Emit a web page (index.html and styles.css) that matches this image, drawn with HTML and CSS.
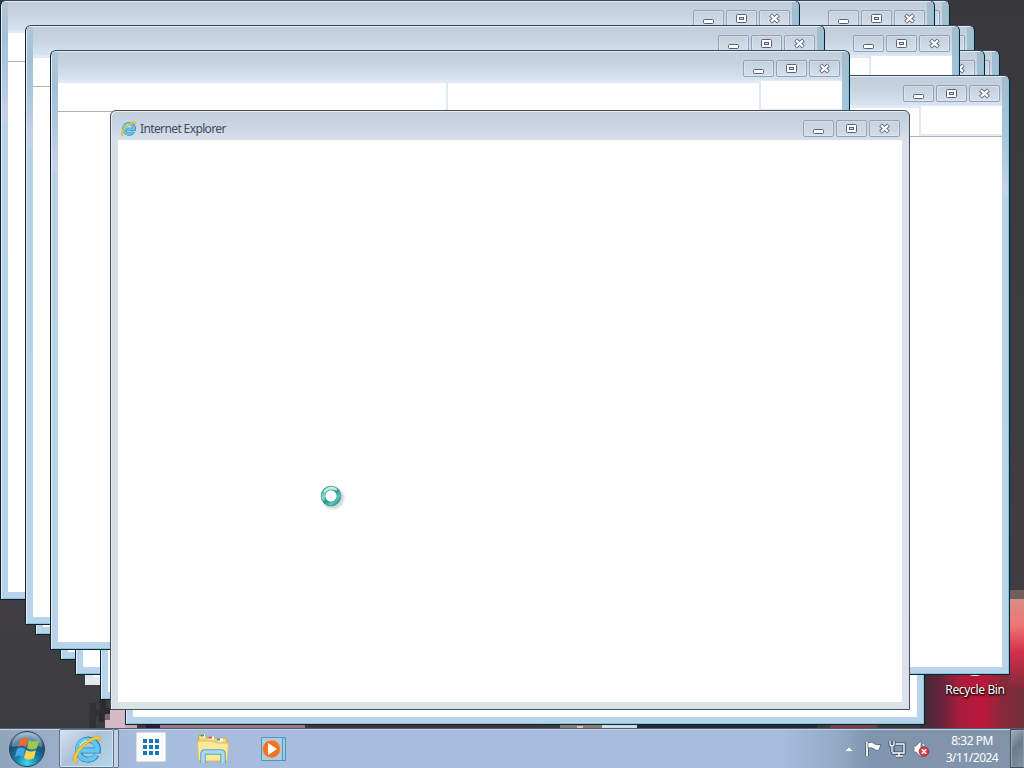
FILE: index.html
```
<!DOCTYPE html>
<html lang="en">

<head>
  <meta charset="UTF-8">
  <meta name="viewport" content="width=device-width, initial-scale=1.0">
  <title>Desktop</title>
  <link rel="stylesheet" href="styles.css">
</head>

<body>
  <svg class="symbols">
    <symbol id="ie" viewBox="0 0 32 32">
      <path d="M9 17.500H27A10 10 0 1 0 25.500 22" fill="none" stroke="#2b83b8" stroke-width="6"/>
      <path d="M9 17.500H26.500A10 10 0 1 0 25 22" fill="none" stroke="#62c8f0" stroke-width="4.400"/>
      <path d="M9 13Q12 7 19 7.500" fill="none" stroke="#b8effc" stroke-width="1.500"/>
      <path d="M5 30C-1 28 4 18 12 11S28 1 30 5c0 1-.3 2-1 3-1-4-9-1-15.500 5S3 27 7 29Z" fill="#f6ce35" stroke="#c79a20" stroke-width=".6"/>
    </symbol>
    <symbol id="min" viewBox="0 0 31 17">
      <rect x="10.500" y="9.500" width="10" height="4" rx="1" fill="#fff" stroke="#5a6078"/>
    </symbol>
    <symbol id="max" viewBox="0 0 31 17">
      <rect x="10.500" y="4.500" width="10" height="8" rx="1" fill="#fff" stroke="#5a6078"/>
      <rect x="13.500" y="7.500" width="4" height="2" fill="#d4dce8" stroke="#5a6078"/>
    </symbol>
    <symbol id="close" viewBox="0 0 31 17">
      <path d="M11.500 5L19.500 12M19.500 5L11.500 12" stroke="#5a6078" stroke-width="4"/>
      <path d="M12 5.400L19 11.600M19 5.400L12 11.600" stroke="#fff" stroke-width="2.200"/>
    </symbol>
  </svg>

  <div class="desktop">
    <svg class="wallpaper" viewBox="0 0 1024 768" preserveAspectRatio="none">
      <defs>
        <linearGradient id="dark" x1="0" y1="0" x2="0" y2="1">
          <stop offset="0" stop-color="#39383d"/>
          <stop offset=".8" stop-color="#403e43"/>
          <stop offset="1" stop-color="#393b3d"/>
        </linearGradient>
        <linearGradient id="red">
          <stop offset="0" stop-color="#3a2b34"/>
          <stop offset=".2" stop-color="#65243a"/>
          <stop offset=".38" stop-color="#a71c3c"/>
          <stop offset=".6" stop-color="#bd1739"/>
          <stop offset=".8" stop-color="#87293b"/>
          <stop offset="1" stop-color="#72303b"/>
        </linearGradient>
        <linearGradient id="glow" x1="0" y1="0" x2="0" y2="1">
          <stop offset="0" stop-color="#d78f86"/>
          <stop offset=".3" stop-color="#ee7773"/>
          <stop offset=".6" stop-color="#d52e4c"/>
          <stop offset="1" stop-color="#82293b"/>
        </linearGradient>
      </defs>
      <rect width="1024" height="768" fill="url(#dark)"/>
      <rect x="920" y="672" width="104" height="58" fill="url(#red)"/>
      <rect x="1009" y="598" width="15" height="90" fill="url(#glow)"/>
      <rect x="1009" y="590" width="15" height="9" fill="#725e5c"/>
      <path d="M88 690h12v10H84z" fill="#3a3f3e"/>
      <path d="M90 703h6v7h5v6h-5v12h-7z" fill="#303335"/>
      <path d="M99 700h7v8h4v8h-6v6h-5v-9h2z" fill="#2c2b2d"/>
      <path d="M110 710h16v19h-21v-9h5z" fill="#d5b9c4"/>
      <path d="M105 714h5v6h-5z" fill="#786b70"/>
      <rect x="125" y="724" width="415" height="5" fill="#48323e"/>
      <rect x="125" y="724" width="12" height="5" fill="#c9a6b7"/>
      <rect x="146" y="724" width="14" height="5" fill="#351738"/>
      <rect x="160" y="724" width="145" height="5" fill="#9e7888"/>
      <rect x="560" y="724" width="50" height="5" fill="#8c7b75"/>
      <rect x="577" y="726" width="6" height="3" fill="#e1c9b1"/>
      <rect x="602" y="724" width="35" height="5" fill="#cbdde7"/>
      <rect x="637" y="724" width="180" height="5" fill="#25293a"/>
      <rect x="830" y="724" width="47" height="5" fill="#793b47"/>
    </svg>

    <div class="shortcut">
      <svg class="bin" viewBox="0 0 32 6"><ellipse cx="16" cy="1" rx="8" ry="3" fill="#f3eff0"/></svg>
      <span>Recycle Bin</span>
    </div>

    <div class="windows"></div>

    <svg class="busy" viewBox="0 0 28 28">
      <defs>
        <linearGradient id="ring" x1="0" y1="0" x2="1" y2="1">
          <stop offset="0" stop-color="#2b9c8d"/>
          <stop offset=".3" stop-color="#91dfd2"/>
          <stop offset=".5" stop-color="#279385"/>
          <stop offset=".75" stop-color="#58cdb9"/>
          <stop offset="1" stop-color="#2a8b80"/>
        </linearGradient>
      </defs>
      <circle class="busy-shadow" cx="15" cy="15" r="9"/>
      <circle cx="13" cy="13" r="8" fill="#fff" stroke="#3f908a" stroke-width="4.600"/>
      <circle cx="13" cy="13" r="8" fill="none" stroke="url(#ring)" stroke-width="3.600"/>
      <path d="M6 9Q12 2 19 7" fill="none" stroke="#b9f1e8" stroke-width="2"/>
    </svg>
  </div>

  <div class="taskbar">
    <a class="start" href="javascript:;">
      <svg viewBox="0 0 38 38">
        <defs>
          <radialGradient id="orb" cx=".5" cy=".9" r=".85">
            <stop offset="0" stop-color="#43d8ee"/>
            <stop offset=".4" stop-color="#147aa8"/>
            <stop offset=".75" stop-color="#204b70"/>
            <stop offset="1" stop-color="#8eafc6"/>
          </radialGradient>
        </defs>
        <circle cx="19" cy="19" r="17.500" fill="url(#orb)" stroke="#284660"/>
        <path d="M4 17a15 14 0 0 1 30 0q-14-5-30 0" fill="#c2d7e4" opacity=".4"/>
        <path d="M13 9q4-3 7 0l-2 8q-4-3-8 0z" fill="#ef6a2e"/>
        <path d="M21 10q5 3 10 0l-2 8q-5 3-10 0z" fill="#9fc94a"/>
        <path d="M9 19q4-3 8 0l-2 8q-4-3-8 0z" fill="#48a5e5"/>
        <path d="M18 20q5 3 10 0l-2 8q-5 3-10 0z" fill="#ffd54a"/>
      </svg>
    </a>
    <div class="task-group">
      <a class="task task-active" href="javascript:;"><svg class="ie-big"><use href="#ie"/></svg></a>
      <i class="task-edge"></i>
    </div>
    <a class="task apps" href="javascript:;">
      <svg viewBox="0 0 30 30">
        <rect x=".5" y=".5" width="29" height="29" rx="1" fill="#fafafa" stroke="#dce0e5"/>
        <path d="M7 7h4v4H7zM13 7h4v4h-4zM19 7h4v4h-4zM7 13h4v4H7zM13 13h4v4h-4zM19 13h4v4h-4zM7 19h4v4H7zM13 19h4v4h-4zM19 19h4v4h-4z" fill="#1875b8"/>
      </svg>
    </a>
    <a class="task folder" href="javascript:;">
      <svg viewBox="0 0 34 30">
        <path d="M2.500 3V1.500h7L11 4h20v23H2.500z" fill="#f1d66f" stroke="#c7a84b"/>
        <path d="M5 2h4M13 4h5M22 6h5" stroke="#fff" stroke-width="3"/>
        <path d="M5 1.500h3" stroke="#39a34a" stroke-width="2"/>
        <path d="M13 3.500h3" stroke="#d8423a" stroke-width="2"/>
        <path d="M21 5.500h3" stroke="#348bd0" stroke-width="2"/>
        <path d="M1.500 7h16l2 2h13l-1 18h-29z" fill="#fae89b" stroke="#d9bd60"/>
        <path d="M7 29V20q0-2 2-2h16q2 0 2 2v9" fill="none" stroke="#5aa1c5" stroke-width="5.500"/>
        <path d="M7 29V20q0-2 2-2h16q2 0 2 2v9" fill="none" stroke="#a7dbed" stroke-width="3.500"/>
      </svg>
    </a>
    <a class="task player" href="javascript:;">
      <svg viewBox="0 0 28 26">
        <path d="M20.500 1.500h5v23h-5z" fill="#9fcbe4" stroke="#4b91b8"/>
        <path d="M1.500 1.500h21v23h-21z" fill="#a9cfe6" stroke="#5794bd"/>
        <circle cx="11.500" cy="13" r="9" fill="#ed7424" stroke="#e7b18d"/>
        <path d="M8 7l9 6-9 6z" fill="#fff"/>
      </svg>
    </a>

    <div class="tray">
      <svg class="tray-icons" viewBox="0 0 92 20">
        <path d="M2.500 12.500l4.500-4.500 4.500 4.500z" fill="#fff" stroke="#6b7e94" stroke-width=".5"/>
        <path d="M25 3v14" stroke="#43566c" stroke-width="3.500"/>
        <path d="M25 3v14" stroke="#fff" stroke-width="1.800"/>
        <path d="M26 3.500q4-1 7 1.500 3 2 6 0l-2 6q-3 1-5-1-2-2-6-1z" fill="#fff" stroke="#43566c" stroke-width=".7"/>
        <path d="M53 5h9v9H51V9M54 17h7M57 14v3" fill="none" stroke="#34475d" stroke-width="3.200"/>
        <path d="M53 5h9v9H51V9M54 17h7M57 14v3" fill="none" stroke="#fff" stroke-width="1.400"/>
        <path d="M48 2v3q0 2 2 2t2-2V2M50 7v6" fill="none" stroke="#34475d" stroke-width="3"/>
        <path d="M48 2v3q0 2 2 2t2-2V2M50 7v6" fill="none" stroke="#fff" stroke-width="1.300"/>
        <path d="M72 7h2l5-5v16l-5-5h-2z" fill="#fff" stroke="#52657b" stroke-width=".7"/>
        <path d="M81 5q3 3 0 7" fill="none" stroke="#fff"/>
        <circle cx="82" cy="12.500" r="4.800" fill="#d83c43" stroke="#a9303b"/>
        <path d="M79.800 10.300l4.400 4.400M84.200 10.300l-4.400 4.400" stroke="#fff" stroke-width="1.600"/>
      </svg>
      <div class="clock">
        <p class="time">8:32 PM</p>
        <p class="date">3/11/2024</p>
      </div>
      <a class="show-desktop" href="javascript:;"></a>
    </div>
  </div>

  <script src="script.js"></script>
</body>

</html>
```
FILE: styles.css
```
* {
  box-sizing: border-box;
}

body {
  margin: 0;
  width: 1024px;
  height: 768px;
  overflow: hidden;
  display: flex;
  flex-direction: column;
  font-family: "Noto Sans", "Open Sans", sans-serif;
}

p {
  margin: 0;
}

svg {
  display: block;
}

.symbols {
  position: absolute;
  width: 0;
  height: 0;
}

.desktop {
  position: relative;
  height: 728px;
  overflow: hidden;
  background-color: #39383d;
}

.wallpaper {
  width: 1024px;
  height: 768px;
}

/* windows */
.window {
  position: absolute;
  width: 800px;
  height: 600px;
  display: flex;
  flex-direction: column;
  padding: 0 7px 7px;
  border: 1px solid #10202c;
  border-top-color: #35465a;
  border-radius: 6px 6px 0 0;
  background: linear-gradient(to bottom, #c0ced9 0, #c5d3df 12px, #d6e3f0 29px, #bad2e3 60px, #c8d3eb 105px, #c8d3ec 117px, #b9d3e4 122px, #b9d3ea 100%);
  box-shadow: inset 1px 1px 0 #e4edf5, inset -1px -1px 0 #7dc8df;
}

.window::before,
.window::after {
  content: "";
  position: absolute;
  top: 1px;
  width: 6px;
  height: 118px;
}

.window::before {
  left: 1px;
  background: linear-gradient(to bottom, #b3c6d7 0, #a4c0d8 35px, transparent);
}

.window::after {
  right: 1px;
  background: linear-gradient(to bottom, #a3bccd 0, #a2c5dc 50px, transparent);
}

.window.active {
  border-color: #474b5c;
  background: linear-gradient(to right, #d5dee8, transparent 12px, transparent 785px, #dcdfed) 0 29px no-repeat,
    linear-gradient(to bottom, #c2cdd8 0, #c9d5e2 14px, #d8dfeb 29px, #d9dfe8 60%, #d8e4e6 100%);
  box-shadow: inset 1px 1px 0 #e9eef4;
}

.window.active::before,
.window.active::after {
  display: none;
}

.window.bare {
  border-color: transparent;
  background: #dfe9ef;
  box-shadow: none;
}

.title-bar {
  display: flex;
  align-items: center;
  flex: none;
  height: 29px;
  padding: 5px 2px 0;
}

.title-bar .ie-small {
  width: 17px;
  height: 17px;
  margin-right: 3px;
}

.title-bar .title {
  padding-top: 1px;
  color: #414c5c;
  font-size: 12px;
  line-height: 16px;
  letter-spacing: -0.62px;
  white-space: nowrap;
}

.controls {
  display: flex;
  gap: 2px;
  margin-left: auto;
  margin-top: 1px;
}

.controls span {
  width: 31px;
  height: 17px;
  border: 1px solid #93a2bb;
  border-radius: 2px;
  box-shadow: inset 0 0 0 1px rgba(255, 255, 255, 0.25);
}

.controls svg {
  width: 31px;
  height: 17px;
  margin: -1px 0 0 -1px;
}

.window-body {
  flex: 1;
  background-color: #fff;
}

.toolbar {
  display: flex;
  align-items: flex-end;
  height: 32px;
  background-color: #e1e9f2;
  border-bottom: 1px solid #abb1b8;
}

.toolbar span {
  height: 28px;
  background-color: #fff;
}

.toolbar .address {
  width: 388px;
  margin-right: 2px;
}

.toolbar .tabs {
  width: 311px;
  margin-right: 2px;
}

.toolbar .tools {
  flex: 1;
  height: 30px;
  border-bottom: 2px solid #e5e8ec;
}

/* desktop icon */
.shortcut {
  position: absolute;
  left: 935px;
  top: 672px;
  width: 80px;
  display: flex;
  flex-direction: column;
  align-items: center;
  color: #fff;
  font-size: 12px;
  line-height: 16px;
  letter-spacing: -0.35px;
  text-shadow: 1px 1px 2px #000, 0 1px 2px #000;
}

.shortcut .bin {
  width: 32px;
  height: 6px;
  margin-bottom: 4px;
}

.busy {
  position: absolute;
  left: 318px;
  top: 483px;
  width: 28px;
  height: 28px;
}

.busy-shadow {
  fill: none;
  stroke: rgba(80, 90, 100, 0.25);
  stroke-width: 4px;
  filter: blur(1px);
}

/* taskbar */
.taskbar {
  display: flex;
  align-items: center;
  height: 40px;
  border-top: 1px solid #52606f;
  box-shadow: inset 0 1px 0 #c3d1e3;
  background: linear-gradient(to right, #91a5bd, #9bafca 60px, #a6bddd 140px, #a6bddd 780px, #94abc7 835px, #8095ae 870px, #8293a8 1024px);
}

.start {
  width: 38px;
  height: 38px;
  margin-left: 8px;
}

.start svg {
  width: 38px;
  height: 38px;
}

.task-group {
  display: flex;
  height: 39px;
  margin-left: 13px;
}

.task {
  display: flex;
  align-items: center;
  justify-content: center;
}

.task-active {
  width: 55px;
  border: 1px solid #5c7087;
  border-radius: 2px;
  background: linear-gradient(135deg, #d6e1ed, #abc1d9 45%, #b5d7e9);
  box-shadow: inset 0 0 0 1px #d5e2ef;
}

.task-edge {
  width: 5px;
  border: 1px solid #5c7087;
  border-left: 0;
  border-radius: 0 2px 2px 0;
  background-color: #c3d3e5;
}

.ie-big {
  width: 32px;
  height: 32px;
}

.apps {
  margin-left: 17px;
  margin-bottom: 3px;
}

.apps svg {
  width: 30px;
  height: 30px;
}

.folder {
  margin-left: 30px;
}

.folder svg {
  width: 34px;
  height: 30px;
}

.player {
  margin-left: 30px;
}

.player svg {
  width: 28px;
  height: 26px;
}

.tray {
  display: flex;
  align-items: center;
  height: 39px;
  margin-left: auto;
}

.tray-icons {
  width: 92px;
  height: 20px;
}

.clock {
  width: 74px;
  margin-right: 1px;
  margin-left: 1px;
  color: #fff;
  font-size: 12px;
  line-height: 17px;
  letter-spacing: -0.5px;
  text-align: center;
}

.show-desktop {
  width: 14px;
  height: 39px;
  border: 1px solid #41505f;
  border-right-color: #8c9aaa;
  background: linear-gradient(135deg, #a2afbb, #697b8c 45%, #8394a4);
  box-shadow: inset 1px 1px 0 #9cabb9;
}
```
FILE: script.js
```
// bottom of the stack first
let windows = [
  { x: 85, y: 85, type: "bare" },
  { x: 35, y: 35 },
  { x: 60, y: 60 },
  { x: 75, y: 75 },
  { x: 100, y: 100 },
  { x: 125, y: 125 },
  { x: 150, y: 0 },
  { x: 135, y: 0 },
  { x: 175, y: 25 },
  { x: 200, y: 50 },
  { x: 185, y: 50 },
  { x: 160, y: 25 },
  { x: 210, y: 75 },
  { x: 0, y: 0 },
  { x: 25, y: 25 },
  { x: 50, y: 50 },
  { x: 110, y: 110, type: "active" }
];

let oWindows = document.querySelector(".windows");

windows.forEach(function (item) {
  let ele = document.createElement("div");
  ele.classList.add("window");
  if (item.type) {
    ele.classList.add(item.type);
  }
  ele.style.left = item.x + "px";
  ele.style.top = item.y + "px";

  let active = item.type === "active";
  let caption = active ? `<svg class="ie-small"><use href="#ie"/></svg><span class="title">Internet Explorer</span>` : "";
  let toolbar = active ? "" : `<div class="toolbar">
      <span class="address"></span><span class="tabs"></span><span class="tools"></span>
    </div>`;

  ele.innerHTML = `
    <div class="title-bar">${caption}
      <div class="controls">
        <span><svg><use href="#min"/></svg></span>
        <span><svg><use href="#max"/></svg></span>
        <span><svg><use href="#close"/></svg></span>
      </div>
    </div>
    <div class="window-body">${item.type === "bare" ? "" : toolbar}</div>`;
  oWindows.appendChild(ele);
});
```
